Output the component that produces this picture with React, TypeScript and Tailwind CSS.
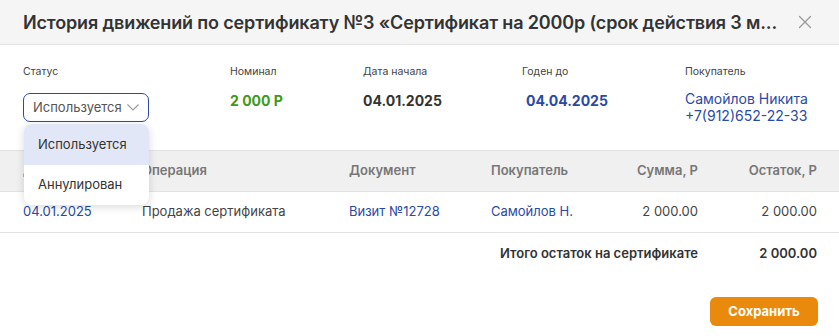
import { X } from 'lucide-react';

const blue = 'text-[#2a4aa6]';

export default function App() {
  return (
    <div className="w-[839px] h-[336px] bg-white font-['Inter',sans-serif] text-[#333] relative overflow-hidden">
      {/* Header */}
      <div className="h-[45px] bg-[#f5f5f5] border-b border-[#e2e2e2] flex items-center pl-[23px] pr-[23px] gap-4">
        <h2 className="flex-1 whitespace-nowrap text-[18px] font-semibold tracking-[-0.15px] text-[#333]">
          История движений по сертификату №3 «Сертификат на 2000р (срок действия 3 м...
        </h2>
        <X className="w-[22px] h-[22px] text-[#999]" strokeWidth={1.3} />
      </div>

      {/* Info */}
      <div className="grid grid-cols-[207px_133px_159px_163px_1fr] pl-[23px] pt-[19px] pb-[26px]">
        <div>
          <div className="text-[10.5px] leading-4 text-[#444]">Статус</div>
          <div className="relative mt-[13px]">
            <div className="w-[126px] h-[29px] border border-[#2a4aa6] rounded-[7px] flex items-center justify-between pl-[9px] pr-[9px] text-[13px] text-[#555]">
              <span>Используется</span>
              <svg width="12" height="7" viewBox="0 0 12 7" fill="none" className="text-[#999]">
                <path d="M0.5 0.5L6 6L11.5 0.5" stroke="currentColor" strokeWidth="1.1" />
              </svg>
            </div>
            <div className="absolute z-10 left-px top-[31px] w-[125px] bg-white rounded-[8px] shadow-[0_2px_8px_rgba(0,0,0,0.15)] overflow-hidden text-[13px] text-[#333]">
              <div className="h-[41px] flex items-center pl-[14px] bg-[#e1e7f6]">Используется</div>
              <div className="h-[40px] flex items-center pl-[14px]">Аннулирован</div>
            </div>
          </div>
        </div>
        <div>
          <div className="text-[10.5px] leading-4 text-[#444]">Номинал</div>
          <div className="mt-[13px] text-[14px] leading-4 font-bold text-[#3d9a1a]">2 000 Р</div>
        </div>
        <div>
          <div className="text-[10.5px] leading-4 text-[#444]">Дата начала</div>
          <div className="mt-[13px] text-[14px] leading-4 font-bold text-[#333]">04.01.2025</div>
        </div>
        <div>
          <div className="text-[10.5px] leading-4 text-[#444]">Годен до</div>
          <div className={`mt-[13px] pl-1 text-[14px] leading-4 font-bold ${blue}`}>04.04.2025</div>
        </div>
        <div>
          <div className="text-[10.5px] leading-4 text-[#444]">Покупатель</div>
          <div className={`mt-[10px] text-[14px] leading-[17px] ${blue}`}>
            <div>Самойлов Никита</div>
            <div>+7(912)652-22-33</div>
          </div>
        </div>
      </div>

      {/* Table */}
      <div className="border-t border-[#e2e2e2]">
        <div className="h-[41px] bg-[#f0f0f0] border-b border-[#e2e2e2] grid grid-cols-[119px_207px_142px_87px_120px_119px] items-center pl-[23px] text-[13px] font-semibold text-[#777]">
          <div>Дата</div>
          <div>Операция</div>
          <div>Документ</div>
          <div>Покупатель</div>
          <div className="text-right">Сумма, Р</div>
          <div className="text-right">Остаток, Р</div>
        </div>
        <div className="h-[41px] border-b border-[#e2e2e2] grid grid-cols-[119px_207px_142px_87px_120px_119px] items-center pl-[23px] text-[13px] text-[#444]">
          <div className={blue}>04.01.2025</div>
          <div>Продажа сертификата</div>
          <div className={blue}>Визит №12728</div>
          <div className={`${blue} whitespace-nowrap`}>Самойлов Н.</div>
          <div className="text-right">2 000.00</div>
          <div className="text-right">2 000.00</div>
        </div>
        <div className="h-[41px] grid grid-cols-[1fr_119px] items-center pl-[23px] pr-[22px] text-[13px] font-semibold text-[#333]">
          <div className="text-right">Итого остаток на сертификате</div>
          <div className="text-right">2 000.00</div>
        </div>
      </div>

      {/* Footer */}
      <div className="flex justify-end pr-[21px] pt-[23px]">
        <button className="w-[108px] h-[29px] rounded-[6px] bg-[#e98a0c] text-white text-[13px] font-bold">
          Сохранить
        </button>
      </div>
    </div>
  );
}
